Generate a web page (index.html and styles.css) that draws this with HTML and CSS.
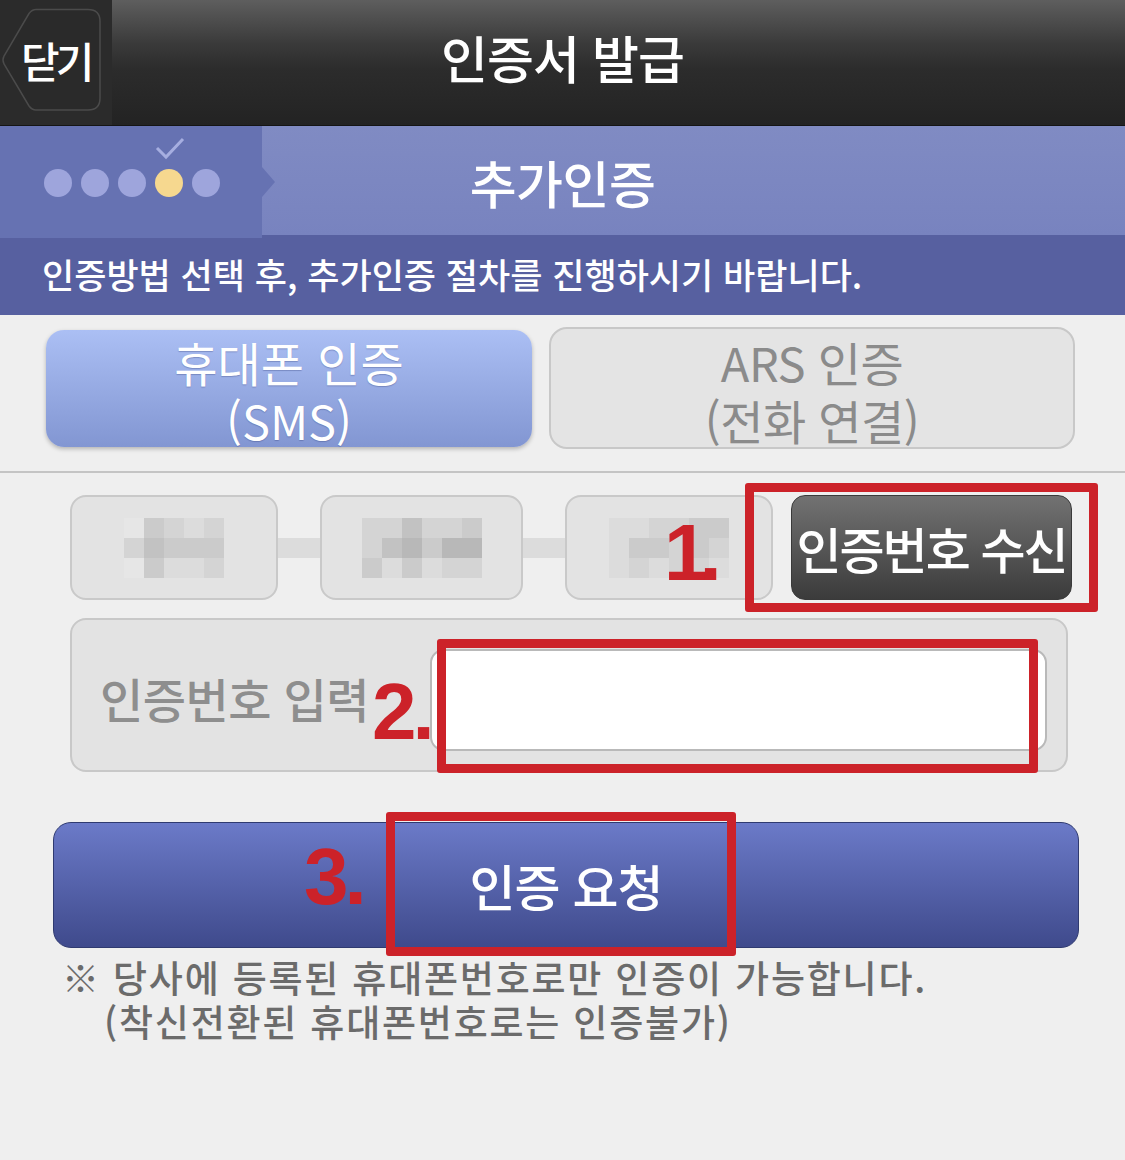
FILE: index.html
```html
<!DOCTYPE html>
<html lang="ko">
<head>
  <meta charset="UTF-8" />
  <meta name="viewport" content="width=device-width, initial-scale=1.0" />
  <title>인증서 발급</title>
  <link rel="stylesheet" href="styles.css">
</head>
<body>
  <header class="topbar">
    <div class="close-area">
      <button class="close-btn">
        <svg class="close-shape" width="102" height="104" viewBox="0 0 102 104">
          <path d="M36 1.5 H88 Q100 1.5 100 13.5 V90 Q100 102 88 102 H36 Q32 102 29 98 L4 56 Q2 52 4 48 L29 5.5 Q32 1.5 36 1.5 Z" />
        </svg>
        <span>닫기</span>
      </button>
    </div>
    <h1>인증서 발급</h1>
  </header>

  <div class="stepbar">
    <div class="steps">
      <span class="dot"></span>
      <span class="dot"></span>
      <span class="dot"></span>
      <span class="dot on">
        <svg class="check" width="30" height="24" viewBox="0 0 30 24">
          <path d="M2 11 L11 20 L28 2" />
        </svg>
      </span>
      <span class="dot"></span>
    </div>
    <h2>추가인증</h2>
  </div>

  <div class="notice">인증방법 선택 후, 추가인증 절차를 진행하시기 바랍니다.</div>

  <div class="tabs">
    <button class="tab sms"><span>휴대폰 인증</span><span>(SMS)</span></button>
    <button class="tab ars"><span>ARS 인증</span><span>(전화 연결)</span></button>
  </div>
  <div class="divider"></div>

  <div class="phone-row">
    <div class="num-box">
      <div class="mosaic cols5">
        <i class="c1"></i><i class="c4"></i><i class="c3"></i><i class="c2"></i><i class="c3"></i>
        <i class="c3"></i><i class="c5"></i><i class="c4"></i><i class="c4"></i><i class="c4"></i>
        <i class="c1"></i><i class="c4"></i><i class="c2"></i><i class="c2"></i><i class="c3"></i>
      </div>
    </div>
    <div class="dash"></div>
    <div class="num-box">
      <div class="mosaic cols6">
        <i class="c3"></i><i class="c3"></i><i class="c5"></i><i class="c3"></i><i class="c3"></i><i class="c4"></i>
        <i class="c3"></i><i class="c5"></i><i class="c6"></i><i class="c4"></i><i class="c6"></i><i class="c6"></i>
        <i class="c4"></i><i class="c2"></i><i class="c4"></i><i class="c2"></i><i class="c3"></i><i class="c3"></i>
      </div>
    </div>
    <div class="dash"></div>
    <div class="num-box">
      <div class="mosaic cols6">
        <i class="c2"></i><i class="c2"></i><i class="c3"></i><i class="c3"></i><i class="c4"></i><i class="c4"></i>
        <i class="c2"></i><i class="c4"></i><i class="c4"></i><i class="c3"></i><i class="c4"></i><i class="c3"></i>
        <i class="c2"></i><i class="c3"></i><i class="c2"></i><i class="c3"></i><i class="c3"></i><i class="c2"></i>
      </div>
    </div>
    <button class="recv-btn">인증번호 수신</button>
    <span class="mark-no n1">1.</span>
    <div class="mark mark1"></div>
  </div>

  <div class="code-row">
    <label class="code-label" for="code">인증번호 입력</label>
    <input class="code-input" id="code" type="text">
    <span class="mark-no n2">2.</span>
    <div class="mark mark2"></div>
  </div>

  <button class="submit">
    인증 요청
    <span class="mark-no n3">3.</span>
    <span class="mark mark3"></span>
  </button>

  <div class="note">
    <div>※ 당사에 등록된 휴대폰번호로만 인증이 가능합니다.</div>
    <div class="sub">(착신전환된 휴대폰번호로는 인증불가)</div>
  </div>
</body>
</html>
```

FILE: styles.css
```css
body {
  margin: 0;
  background: #efefef;
  font-family: "Noto Sans CJK KR", "Noto Sans", sans-serif;
  color: #fff;
}
button {
  font-family: inherit;
  cursor: pointer;
}

/* top bar */
.topbar {
  display: grid;
  grid-template-columns: 112px 1fr 112px;
  height: 125px;
  background: linear-gradient(#5e5e5e 0%, #3a3a3a 35%, #2c2c2c 55%, #232323 100%);
  border-bottom: 1px solid #151515;
}
.close-area {
  background: #2b2b2b;
}
.close-btn {
  position: relative;
  width: 112px;
  height: 125px;
  padding: 0 0 6px 21px;
  border: none;
  background: none;
  text-align: left;
}
.close-shape {
  position: absolute;
  left: 0;
  top: 8px;
}
.close-shape path {
  fill: #2a2a2a;
  stroke: #4b4b4b;
  stroke-width: 1.5;
}
.close-btn span {
  position: relative;
  font-size: 42px;
  font-weight: 500;
  letter-spacing: -4px;
  color: #fff;
}
.topbar h1 {
  margin: 0;
  text-align: center;
  line-height: 114px;
  font-size: 51px;
  font-weight: 500;
  letter-spacing: -1px;
}

/* step bar */
.stepbar {
  display: grid;
  grid-template-columns: 262px 1fr 262px;
  height: 109px;
  background: linear-gradient(#808bc3, #7883bf);
}
.steps {
  position: relative;
  display: flex;
  align-items: center;
  gap: 9px;
  padding: 2px 0 0 44px;
  background: #6672b2;
}
.steps::after {
  content: "";
  position: absolute;
  right: -13px;
  top: 41px;
  border-left: 13px solid #6672b2;
  border-top: 15px solid transparent;
  border-bottom: 15px solid transparent;
}
.dot {
  position: relative;
  width: 28px;
  height: 28px;
  border-radius: 50%;
  background: #9ea5dc;
}
.dot.on {
  background: #f6d88f;
}
.check {
  position: absolute;
  left: 0;
  top: -32px;
}
.check path {
  fill: none;
  stroke: #a6aee0;
  stroke-width: 3;
}
.stepbar h2 {
  margin: 0;
  text-align: center;
  line-height: 112px;
  font-size: 51px;
  font-weight: 500;
  letter-spacing: -0.5px;
}

.notice {
  height: 80px;
  padding-left: 42px;
  background: #5760a0;
  line-height: 78px;
  font-size: 35px;
  font-weight: 500;
  letter-spacing: 0;
}

/* method tabs */
.tabs {
  display: flex;
  align-items: center;
  gap: 17px;
  padding: 12px 0 0 46px;
}
.tab {
  box-sizing: border-box;
  display: flex;
  flex-direction: column;
  align-items: center;
  justify-content: center;
  gap: 6px;
  border-radius: 18px;
  font-size: 47px;
  line-height: 52px;
  letter-spacing: 0;
  padding: 5px 0 0;
}
.tab.sms {
  width: 486px;
  height: 117px;
  border: none;
  background: linear-gradient(#abbff4, #8296d2);
  color: #fff;
  box-shadow: 0 2px 4px rgba(0,0,0,0.25);
  text-shadow: 0 1px 1px rgba(40,50,110,0.3);
}
.tab.ars {
  width: 526px;
  height: 122px;
  border: 2px solid #c8c8c8;
  background: #e4e4e4;
  color: #8b8b8b;
  letter-spacing: -0.5px;
}
.divider {
  height: 2px;
  margin-top: 22px;
  background: #c4c4c4;
}

/* phone number row */
.phone-row {
  position: relative;
  display: flex;
  height: 105px;
  margin-top: 22px;
  padding-left: 70px;
}
.num-box {
  box-sizing: border-box;
  width: 208px;
  display: flex;
  align-items: center;
  justify-content: center;
  background: #e3e3e3;
  border: 2px solid #c9c9c9;
  border-radius: 16px;
}
.num-box:nth-child(3) {
  width: 203px;
}
.dash {
  width: 42px;
  height: 20px;
  align-self: center;
  background: #dcdcdc;
}
.mosaic {
  display: grid;
  grid-auto-rows: 20px;
}
.mosaic.cols5 {
  grid-template-columns: repeat(5, 20px);
}
.mosaic.cols6 {
  grid-template-columns: repeat(6, 20px);
}
.c1 { background: #e6e6e6; }
.c2 { background: #dcdcdc; }
.c3 { background: #d4d4d4; }
.c4 { background: #cbcbcb; }
.c5 { background: #c2c2c2; }
.c6 { background: #b8b8b8; }
.recv-btn {
  width: 281px;
  margin-left: 18px;
  padding: 0;
  border: 1px solid #3a3a3a;
  border-radius: 14px;
  background: linear-gradient(#727272, #3b3b3b);
  color: #fff;
  font-size: 49px;
  font-weight: 500;
  letter-spacing: -2px;
}

/* code input row */
.code-row {
  position: relative;
  box-sizing: border-box;
  display: flex;
  width: 998px;
  height: 154px;
  margin: 18px 0 0 70px;
  background: #e3e3e3;
  border: 2px solid #c8c8c8;
  border-radius: 16px;
}
.code-label {
  padding: 0 0 0 28px;
  align-self: center;
  margin-top: 4px;
  font-size: 47px;
  font-weight: 500;
  letter-spacing: -0.5px;
  color: #8e8e8e;
}
.code-input {
  box-sizing: border-box;
  width: 617px;
  height: 102px;
  margin: 29px 19px 0 auto;
  background: #fff;
  border: 2px solid #b9b9b9;
  border-radius: 14px;
  outline: none;
}

.submit {
  position: relative;
  display: block;
  box-sizing: border-box;
  width: 1026px;
  height: 126px;
  margin: 50px 0 0 53px;
  padding: 0;
  border: 1px solid #2f3a70;
  border-radius: 18px;
  background: linear-gradient(#6b7ac8, #3f4a8c);
  color: #fff;
  font-size: 50px;
  font-weight: 500;
  letter-spacing: -1px;
}

.note {
  margin-top: 7px;
  padding-left: 62px;
  font-size: 37px;
  line-height: 44px;
  font-weight: 500;
  letter-spacing: 1.8px;
  color: #6b6b6b;
}
.note .sub {
  padding-left: 42px;
}

/* red annotation marks */
.mark {
  position: absolute;
  box-sizing: border-box;
  border: 9px solid #cc2229;
  border-radius: 3px;
}
.mark1 {
  left: 745px;
  top: -12px;
  width: 353px;
  height: 129px;
}
.mark2 {
  left: 365px;
  top: 19px;
  width: 601px;
  height: 134px;
}
.mark3 {
  left: 332px;
  top: -11px;
  width: 350px;
  height: 144px;
}
.mark-no {
  position: absolute;
  font-family: "Liberation Sans", Arial, sans-serif;
  font-weight: bold;
  font-size: 80px;
  line-height: 80px;
  color: #cc2229;
  letter-spacing: -4px;
}
.n1 {
  left: 664px;
  top: 18px;
  letter-spacing: -9px;
}
.n2 {
  left: 300px;
  top: 52px;
}
.n3 {
  left: 250px;
  top: 14px;
}
```
